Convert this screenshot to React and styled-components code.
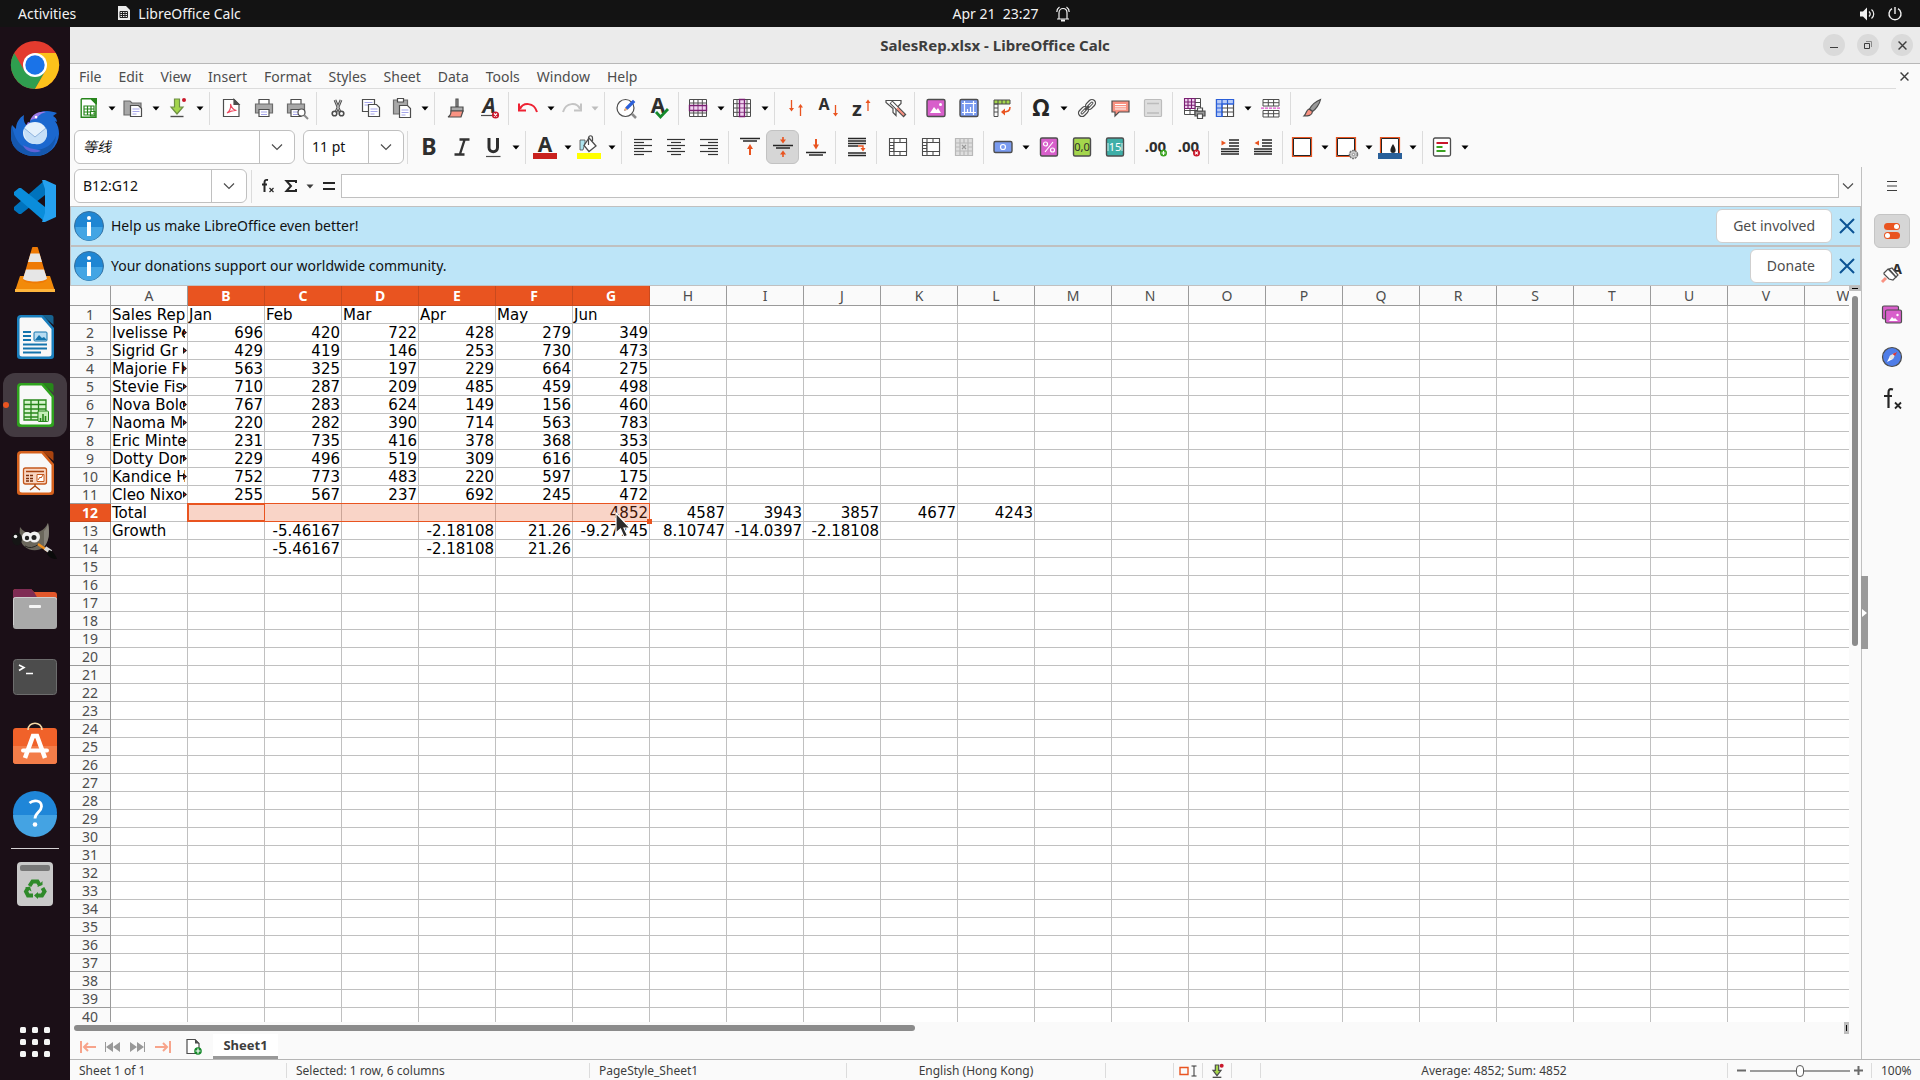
import { useState } from 'react'
import styled, { createGlobalStyle, css } from 'styled-components'

const colors = {
  accent: '#e95420',
  chrome: '#fafafa',
  line: '#c0c0c0',
  softLine: '#dcdcdc',
  headerLine: '#9a9a9a',
  text: '#3d3d3d',
  ink: '#4d4d4d',
  info: '#bde5f8',
}

const columns = 'ABCDEFGHIJKLMNOPQRSTUVW'.split('')

const COL_WIDTH = 77
const ROW_HEIGHT = 18
const HEAD_WIDTH = 41
const HEAD_HEIGHT = 20

const GlobalStyle = createGlobalStyle`
  * {
    box-sizing: border-box;
  }
  body {
    margin: 0;
    overflow: hidden;
    font-family: 'Noto Sans', 'Noto Sans CJK SC', sans-serif;
    font-size: 14px;
    line-height: 20px;
    color: ${colors.text};
  }
  button, input {
    font: inherit;
    color: inherit;
    margin: 0;
    padding: 0;
    border: 0;
    background: none;
  }
  svg {
    display: block;
    flex: none;
    overflow: visible;
  }
`

/* ---------- desktop ---------- */

const Desktop = styled.div`
  height: 100vh;
  display: flex;
  flex-direction: column;
  background: linear-gradient(165deg, #1b0f17 70%, #28131f);
`

const TopBar = styled.header`
  height: 27px;
  flex: none;
  display: grid;
  grid-template-columns: 1fr auto 1fr;
  align-items: center;
  padding: 0 18px;
  background: #131313;
  color: #f2f2f2;
`

const TopGroup = styled.div`
  display: flex;
  align-items: center;
  gap: ${(props) => props.$gap}px;
  justify-content: ${(props) => (props.$end ? 'flex-end' : 'flex-start')};
`

const AppMenu = styled.button`
  display: flex;
  align-items: center;
  gap: 8px;
`

const Clock = styled.button`
  display: flex;
  align-items: center;
  gap: 17px;
  padding-left: 102px;
  white-space: pre;
`

const Workspace = styled.div`
  flex: 1;
  min-height: 0;
  display: flex;
`

const Dock = styled.nav`
  width: 70px;
  flex: none;
  display: flex;
  flex-direction: column;
  align-items: center;
  padding: 6px 0;
`

const DockList = styled.div`
  display: flex;
  flex-direction: column;
  gap: 4px;
`

const DockButton = styled.button`
  position: relative;
  width: 64px;
  height: 64px;
  display: grid;
  place-items: center;
  border-radius: 12px;
  background: ${(props) => (props.$active ? '#433a41' : 'none')};
`

const RunningDot = styled.span`
  position: absolute;
  left: 0;
  top: 29px;
  width: 6px;
  height: 6px;
  border-radius: 3px;
  background: ${colors.accent};
`

const DockRule = styled.div`
  width: 48px;
  height: 1px;
  margin: 3px 0;
  background: #d5d2d4;
`

const Spacer = styled.div`
  flex: 1;
`

/* ---------- window ---------- */

const Window = styled.main`
  flex: 1;
  min-width: 0;
  display: flex;
  flex-direction: column;
  background: ${colors.chrome};
`

const TitleBar = styled.div`
  height: 37px;
  flex: none;
  display: grid;
  grid-template-columns: 1fr auto 1fr;
  align-items: center;
  padding: 0 7px;
  background: #ebebeb;
  border-bottom: 1px solid #b8b8b8;
`

const Title = styled.h1`
  grid-column: 2;
  margin: 0;
  font-size: 15px;
  font-weight: 700;
`

const WindowButtons = styled.div`
  display: flex;
  justify-content: flex-end;
  gap: 12px;
`

const RoundButton = styled.button`
  width: 22px;
  height: 22px;
  display: grid;
  place-items: center;
  border-radius: 11px;
  background: #dadada;
`

const MenuRow = styled.div`
  height: 25px;
  flex: none;
  display: flex;
`

const MenuBar = styled.nav`
  flex: 1;
  display: flex;
  align-items: center;
  gap: 1px;
  padding: 1px 0 0 1px;
  border-bottom: 1px solid ${colors.softLine};
`

const MenuItem = styled.button`
  padding: 0 8px;
  color: ${colors.ink};
`

const CloseDocument = styled.button`
  width: 24px;
  padding-left: 4px;
`

const Toolbar = styled.div`
  height: ${(props) => props.$height}px;
  flex: none;
  display: flex;
  align-items: center;
  padding-left: 4px;
`

const Separator = styled.span`
  width: 1px;
  height: 33px;
  flex: none;
  margin: 0 4px 0 3px;
  background: ${colors.softLine};
`

const ToolButton = styled.button`
  width: 33px;
  height: 34px;
  flex: none;
  display: grid;
  place-items: center;
  ${(props) =>
    props.$pressed &&
    css`
      border: 1px solid #c2c2c2;
      border-radius: 6px;
      background: #d6d6d6;
    `}
`

const SplitTool = styled.span`
  display: flex;
  align-items: center;
  flex: none;
  margin-left: -2px;
`

const CaretButton = styled.button`
  width: 13px;
  height: 34px;
  display: grid;
  place-items: center;
  color: ${(props) => (props.$faded ? '#bdbdbd' : '#000')};
`

const Combo = styled.div`
  width: ${(props) => props.$width}px;
  height: 34px;
  flex: none;
  display: flex;
  margin-right: ${(props) => props.$gap}px;
  border: 1px solid ${colors.line};
  border-radius: 6px;
  background: #fff;
  color: #111;
`

const ComboInput = styled.input`
  flex: 1;
  min-width: 0;
  padding-left: 8px;
  font-style: ${(props) => (props.$italic ? 'italic' : 'normal')};
`

const ComboButton = styled.button`
  width: 35px;
  display: grid;
  place-items: center;
  border-left: 1px solid ${colors.line};
`

/* ---------- document area ---------- */

const Body = styled.div`
  flex: 1;
  min-height: 0;
  display: flex;
`

const DocumentPane = styled.section`
  flex: 1;
  min-width: 0;
  display: flex;
  flex-direction: column;
`

const FormulaBar = styled.div`
  height: 39px;
  flex: none;
  display: flex;
  align-items: center;
  padding: 0 0 1px 4px;
`

const SmallTool = styled.button`
  width: ${(props) => props.$width}px;
  height: 32px;
  display: grid;
  place-items: center;
`

const FormulaInput = styled.input`
  flex: 1;
  min-width: 0;
  height: 24px;
  padding: 0 4px;
  border: 1px solid ${colors.line};
  background: #fff;
`

const ExpandButton = styled.button`
  width: 22px;
  height: 24px;
  display: grid;
  place-items: center;
  padding-right: 4px;
`

const InfoBar = styled.div`
  height: 40px;
  flex: none;
  display: flex;
  align-items: center;
  gap: 7px;
  padding: 0 1px 0 3px;
  border: 1px solid ${colors.line};
  background: ${colors.info};
  color: #111;
`

const InfoActions = styled.div`
  display: flex;
  gap: 3px;
  margin-left: auto;
`

const InfoButton = styled.button`
  height: 34px;
  padding: 0 16px;
  border: 1px solid #cfcfcf;
  border-radius: 6px;
  background: #fff;
  color: ${colors.ink};
`

const InfoClose = styled.button`
  width: 24px;
  display: grid;
  place-items: center;
`

const SheetRow = styled.div`
  flex: 1;
  min-height: 0;
  display: flex;
`

const SheetView = styled.div`
  position: relative;
  flex: 1;
  min-width: 0;
  overflow: hidden;
  background: #fff;
`

const Grid = styled.table`
  table-layout: fixed;
  width: ${HEAD_WIDTH + columns.length * COL_WIDTH}px;
  border-collapse: separate;
  border-spacing: 0;
`

const HeadCell = styled.th`
  width: ${(props) => (props.$corner ? HEAD_WIDTH : COL_WIDTH)}px;
  height: ${HEAD_HEIGHT}px;
  padding: 0;
  line-height: 19px;
  font-weight: ${(props) => (props.$selected ? 700 : 400)};
  color: ${(props) => (props.$selected ? '#fff' : colors.ink)};
  background: ${(props) => (props.$selected ? colors.accent : colors.chrome)};
  border-right: 1px solid ${(props) => (props.$selected ? '#c94a1e' : colors.headerLine)};
  border-bottom: 1px solid ${(props) => (props.$selected ? '#c94a1e' : colors.headerLine)};
`

const RowHead = styled(HeadCell)`
  width: ${HEAD_WIDTH}px;
  height: ${ROW_HEIGHT}px;
  line-height: 17px;
`

const Cell = styled.td`
  height: ${ROW_HEIGHT}px;
  padding: 2px 1px 0;
  border-right: 1px solid ${colors.line};
  border-bottom: 1px solid ${colors.line};
  font-family: 'DejaVu Sans', sans-serif;
  font-size: 15px;
  line-height: 15px;
  color: #000;
  white-space: nowrap;
  text-align: ${(props) => (props.$numeric ? 'right' : 'left')};
`

const Clipped = styled.div`
  display: flex;
  align-items: center;
  height: 17px;
  margin-top: -2px;

  span {
    flex: 1;
    min-width: 0;
    align-self: flex-start;
    overflow: hidden;
    line-height: 19px;
  }
  svg {
    margin: 0 -1px 0 -2px;
  }
`

const SelectionBox = styled.div`
  position: absolute;
  border: 1px solid ${colors.accent};
  background: rgba(233, 84, 32, 0.25);
`

const ActiveCell = styled.div`
  width: ${COL_WIDTH}px;
  height: 100%;
  border: 1px solid ${colors.accent};
`

const FillHandle = styled.div`
  position: absolute;
  right: -3px;
  bottom: -3px;
  width: 5px;
  height: 5px;
  background: ${colors.accent};
`

const Pointer = styled.svg`
  position: absolute;
  left: 545px;
  top: 226px;
`

const ScrollColumn = styled.div`
  width: 12px;
  flex: none;
  display: flex;
  flex-direction: column;
  align-items: center;
`

const SplitHandle = styled.div`
  display: grid;
  place-items: center;
  flex: none;
  width: ${(props) => (props.$vertical ? 5 : 12)}px;
  height: ${(props) => (props.$vertical ? 12 : 5)}px;
  background: #bdbdbd;

  &::after {
    content: '';
    width: ${(props) => (props.$vertical ? 1 : 6)}px;
    height: ${(props) => (props.$vertical ? 6 : 1)}px;
    background: #000;
  }
`

const ScrollThumb = styled.div`
  background: #8b8b8b;
  border-radius: 3px;
  ${(props) => (props.$vertical ? 'width: 6px; height: 47.5%; margin-top: 5px;' : 'height: 6px; width: 47.4%;')}
`

const ScrollRow = styled.div`
  height: 12px;
  flex: none;
  display: flex;
  align-items: center;
  justify-content: space-between;
  padding: 0 12px 0 4px;
`

const TabRow = styled.div`
  height: 25px;
  flex: none;
  display: flex;
  padding-left: 5px;
`

const TabTool = styled.button`
  width: ${(props) => (props.$wide ? 38 : 25)}px;
  display: grid;
  place-items: center;
`

const SheetTab = styled.button`
  width: 65px;
  background: #fff;
  border-bottom: 3px solid #999;
  font-size: 13px;
  font-weight: 700;
`

const Sidebar = styled.aside`
  position: relative;
  width: 59px;
  flex: none;
  display: flex;
  flex-direction: column;
  align-items: center;
  gap: 8px;
  padding: 2px 0 0 2px;
  border-left: 1px solid ${colors.line};
`

const SideButton = styled.button`
  width: 36px;
  height: 34px;
  display: grid;
  place-items: center;
  border: 1px solid ${(props) => (props.$active ? '#c4c4c4' : 'transparent')};
  border-radius: 6px;
  background: ${(props) => (props.$active ? '#d6d6d6' : 'none')};

  &:first-of-type {
    margin-bottom: 3px;
  }
`

const SideGrip = styled.button`
  position: absolute;
  left: -1px;
  top: 409px;
  width: 7px;
  height: 73px;
  background: #9a9a9a;
`

/* ---------- status bar ---------- */

const StatusBar = styled.footer`
  height: 21px;
  flex: none;
  display: grid;
  grid-template-columns: 217px 303px 257px 259px 68px 29px 29px 29px 1fr 144px 48px;
  align-items: center;
  padding-top: 1px;
  border-top: 1px solid #b5b5b5;
  font-size: 12px;
`

const StatusItem = styled.div`
  height: 15px;
  display: flex;
  align-items: center;
  justify-content: ${(props) => (props.$center ? 'center' : 'flex-start')};
  padding-left: ${(props) => (props.$center ? 0 : 9)}px;
  border-right: 1px solid ${colors.softLine};
  white-space: nowrap;

  &:last-child {
    border-right: 0;
  }
`

const ZoomSlider = styled.input`
  appearance: none;
  width: 100px;
  height: 14px;
  margin: 0 4px;

  &::-webkit-slider-runnable-track {
    height: 2px;
    background: #9c9c9c;
  }
  &::-webkit-slider-thumb {
    appearance: none;
    width: 8px;
    height: 12px;
    margin-top: -5px;
    border: 1px solid #5a5a5a;
    border-radius: 4px;
    background: #fff;
  }
`

/* ---------- data ---------- */

const rows = [
  ['Sales Rep', 'Jan', 'Feb', 'Mar', 'Apr', 'May', 'Jun'],
  ['Ivelisse Pe', 696, 420, 722, 428, 279, 349],
  ['Sigrid Gr', 429, 419, 146, 253, 730, 473],
  ['Majorie Fl', 563, 325, 197, 229, 664, 275],
  ['Stevie Fis', 710, 287, 209, 485, 459, 498],
  ['Nova Bolo', 767, 283, 624, 149, 156, 460],
  ['Naoma M', 220, 282, 390, 714, 563, 783],
  ['Eric Minte', 231, 735, 416, 378, 368, 353],
  ['Dotty Dor', 229, 496, 519, 309, 616, 405],
  ['Kandice H', 752, 773, 483, 220, 597, 175],
  ['Cleo Nixo', 255, 567, 237, 692, 245, 472],
  ['Total', '', '', '', '', '', 4852, 4587, 3943, 3857, 4677, 4243],
  ['Growth', '', -5.46167, '', -2.18108, '21.26', '-9.27745', '8.10747', '-14.0397', '-2.18108'],
  ['', '', -5.46167, '', -2.18108, '21.26'],
]

const ROW_COUNT = 40
const selection = { row: 12, from: 1, to: 6 }

const menus = ['File', 'Edit', 'View', 'Insert', 'Format', 'Styles', 'Sheet', 'Data', 'Tools', 'Window', 'Help']

/* ---------- toolbar icons, all on a 24px box ---------- */

const Svg = ({ size = 24, children, ...rest }) => (
  <svg width={size} height={size} viewBox="0 0 24 24" fill="none" stroke="#4d4d4d" strokeWidth="1.2" {...rest}>
    {children}
  </svg>
)

const Glyph = ({ x = 12, y = 18, size = 20, color = '#2e2e2e', weight = 700, slant, children }) => (
  <text
    x={x}
    y={y}
    fontSize={size}
    fontFamily="Noto Sans"
    fontWeight={weight}
    fontStyle={slant ? 'italic' : 'normal'}
    textAnchor="middle"
    fill={color}
    stroke="none"
  >
    {children}
  </text>
)

const lines = (list, color = '#262626', width = 1.5) =>
  list.map(([x1, x2, y]) => <path key={`${x1}-${y}`} d={`M${x1} ${y}H${x2}`} stroke={color} strokeWidth={width} />)

const icons = {
  newSheet: (
    <>
      <path d="M5 2.7h9l5 5v13.600H4.200V3.500z" fill="#fff" stroke="#27851c" strokeWidth="1.4" />
      <path d="M13 2h7v7z" fill="#27851c" stroke="none" />
      <path d="M7 10h10v9H7zM7 13h10M7 16h10M10.500 10v9M14 10v9" stroke="#27851c" strokeWidth="1.2" />
      <path d="M13.500 15.500h4.500v4.500h-4.500z" fill="#fff" stroke="#27851c" />
      <path d="M15 20v-2M17 20v-3.500" stroke="#27851c" />
    </>
  ),
  open: (
    <>
      <path d="M3 19V5h6l2 2h9v12z" fill="#a8a8a8" stroke="#6b6b6b" />
      <path d="M9.500 9.500h8l3 3v8h-11z" fill="#fff" />
      <path d="M11.500 13h7M11.500 15.500h7M11.500 18h4" stroke="#a5a5ea" />
    </>
  ),
  save: (
    <>
      <path d="M9.500 3h5v8h3.500l-6 7-6-7h3.500z" fill="#a4d64c" stroke="#6f8f45" />
      <path d="M5.500 20.500h13" strokeWidth="1.400" />
      <circle cx="19" cy="4" r="2" fill="#c9182b" stroke="none" />
    </>
  ),
  pdf: (
    <>
      <path d="M5 3.500h10l5 5v12H4.500v-17z" fill="#fff" />
      <path d="M15 3.500v5h5z" fill="#4d4d4d" />
      <path d="M8 17c3-2 4-5 3.500-9 1 4 3 6 6 6.500-3-.5-6 .5-9.500 2.500z" stroke="#ee4b62" strokeWidth="1.100" />
    </>
  ),
  print: (
    <>
      <path d="M7 8V3.500h10V8" fill="#fff" />
      <path d="M3.500 8h17v9h-17z" fill="#a8a8a8" stroke="#6b6b6b" />
      <path d="M7 13.500h10v7H7z" fill="#fff" />
      <path d="M9 16h6M9 18.500h6" stroke="#a5a5ea" />
    </>
  ),
  preview: (
    <>
      <path d="M6 8V3.500h10V8" fill="#fff" />
      <path d="M2.500 8h17v9h-17z" fill="#a8a8a8" stroke="#6b6b6b" />
      <path d="M6 13.500h10v7H6z" fill="#fff" />
      <path d="M8 16h6M8 18.500h6" stroke="#a5a5ea" />
      <circle cx="16.500" cy="16.500" r="3.500" fill="#fff" />
      <path d="M19 19l4 4" stroke="#8b8b8b" strokeWidth="2" />
    </>
  ),
  cut: (
    <>
      <path d="M9 4l5 12M15 4l-5 12" stroke="#4d4d4d" strokeWidth="2.800" />
      <path d="M9 4l5 12M15 4l-5 12" stroke="#bbb" strokeWidth="1" />
      <circle cx="8.500" cy="17.500" r="2.300" strokeWidth="1.600" />
      <circle cx="15.500" cy="17.500" r="2.300" strokeWidth="1.600" />
    </>
  ),
  copy: (
    <>
      <path d="M3.500 3.500h12v12h-12z" fill="#fff" />
      <path d="M5.500 6.500h8M5.500 9h4" stroke="#a5a5ea" />
      <path d="M9.500 8.500h8l3 3v9h-11z" fill="#fff" />
      <path d="M11.500 13h7M11.500 15.500h7M11.500 18h4" stroke="#a5a5ea" />
    </>
  ),
  paste: (
    <>
      <path d="M3.500 4h14v14h-14z" fill="#a8a8a8" stroke="#6b6b6b" />
      <path d="M7.500 2.500h6V6h-6z" fill="#fff" />
      <path d="M9.500 9.500h8l3 3v9h-11z" fill="#fff" />
      <path d="M11.500 14h7M11.500 16.500h7M11.500 19h4" stroke="#a5a5ea" />
    </>
  ),
  clone: (
    <>
      <path d="M12 3h2v8h-2z" fill="#aaa" />
      <path d="M7 11h12v4H7z" fill="#aaa" />
      <path d="M7 15h12l-2 6H4c2-1 3-3 3-6z" fill="#f99282" />
    </>
  ),
  clear: (
    <>
      <Glyph y={17} x={12} size={21} slant>A</Glyph>
      <path d="M4 19.500h11" />
      <circle cx="18.500" cy="19" r="3.600" fill="#c9182b" stroke="none" />
      <path d="M17 17.500l3 3M20 17.500l-3 3" stroke="#fff" />
    </>
  ),
  undo: (
    <>
      <path d="M4 13C7 6 18 6 21 16" stroke="#e23" strokeWidth="2" />
      <path d="M3 7.500v7h7" stroke="#e23" strokeWidth="2" />
    </>
  ),
  redo: (
    <>
      <path d="M20 13C17 6 6 6 3 16" stroke="#c4c4c4" strokeWidth="2" />
      <path d="M21 7.500v7h-7" stroke="#c4c4c4" strokeWidth="2" />
    </>
  ),
  find: (
    <>
      <circle cx="11.500" cy="12" r="8.500" fill="#fff" />
      <path d="M18 18l4 4" stroke="#8b8b8b" strokeWidth="2.500" />
      <path d="M11 14l1-2.500 7-7 1.500 1.500-7 7z" fill="#2b5fd9" stroke="#2b5fd9" />
      <path d="M10 15l1.300-3.500 2.200 2.200z" fill="#f7b26a" stroke="none" />
    </>
  ),
  spell: (
    <>
      <Glyph y={17} x={11} size={21}>A</Glyph>
      <path d="M9 16l4.500 5L21 13" stroke="#168a2b" strokeWidth="2.800" />
    </>
  ),
  row: (
    <>
      <path d="M3.500 3.500h17v17h-17zM7.700 3.500v17M12 3.500v17M16.300 3.500v17M3.500 7h17M3.500 17h17" fill="#fff" strokeWidth="1" />
      <path d="M3.500 9.500h17v5h-17z" fill="#f0d3f0" stroke="#7a1f72" strokeWidth="1.400" />
      <path d="M7.700 10v4M12 10v4M16.300 10v4" stroke="#7a1f72" strokeWidth=".8" />
    </>
  ),
  column: (
    <>
      <path d="M3.500 3.500h17v17h-17zM3.500 7.700h17M3.500 12h17M3.500 16.300h17M7 3.500v17M17 3.500v17" fill="#fff" strokeWidth="1" />
      <path d="M9.500 3.500h5v17h-5z" fill="#f0d3f0" stroke="#7a1f72" strokeWidth="1.400" />
      <path d="M10 7.700h4M10 12h4M10 16.300h4" stroke="#7a1f72" strokeWidth=".8" />
    </>
  ),
  sort: (
    <>
      <path d="M7.500 4v9M16.500 20v-9" stroke={colors.accent} strokeWidth="1.300" />
      <path d="M5 12h5l-2.500 3.500zM14 11.500h5L16.500 8z" fill={colors.accent} stroke="none" />
    </>
  ),
  sortAsc: (
    <>
      <Glyph x={7} y={14} size={16}>A</Glyph>
      <path d="M18.500 9v9" stroke={colors.accent} strokeWidth="1.300" />
      <path d="M16 17h5l-2.500 3.500z" fill={colors.accent} stroke="none" />
    </>
  ),
  sortDesc: (
    <>
      <Glyph x={7} y={20} size={20}>z</Glyph>
      <path d="M18 15V5" stroke={colors.accent} strokeWidth="1.300" />
      <path d="M15.500 7h5L18 3.500z" fill={colors.accent} stroke="none" />
    </>
  ),
  filter: (
    <>
      <path d="M3 4.500h15v3l-5 5v7l-3-3v-4l-7-6z" fill="#fff" />
      <path d="M8 6l14 14" stroke="#4d4d4d" strokeWidth="4" />
      <path d="M8.500 6.500L15 13" stroke="#fff" strokeWidth="2" />
      <path d="M14 12l7 7" stroke="#f99282" strokeWidth="2" />
    </>
  ),
  image: (
    <>
      <rect x="3" y="3.500" width="18" height="17" rx="1.500" fill="#d85fcb" strokeWidth="1.400" />
      <path d="M6 17l4-6 2.500 3 1.500-2 3 5z" fill="#fff" stroke="none" />
      <circle cx="16.500" cy="8.500" r="1.500" fill="#fff" stroke="none" />
    </>
  ),
  chart: (
    <>
      <rect x="3" y="3.500" width="18" height="17" rx="1.500" fill="#7a9bf0" strokeWidth="1.400" />
      <path d="M7.500 5v14M5 16.500h14M16.500 5v14M5 7.500h14M10.500 16v-3M13.500 16v-5" stroke="#fff" strokeWidth="1.200" />
    </>
  ),
  pivot: (
    <>
      <path d="M4 4h16v4H4z" fill="#a4d64c" strokeWidth="1" />
      <path d="M4 8h4v12.500H4zM4 12h4M4 16h4M8 4v4M12 4v4M16 4v4" strokeWidth="1" />
      <path d="M20 11c0 4-2 5-8 5" stroke={colors.accent} strokeWidth="1.600" />
      <path d="M11 16l4-3.500v7z" fill={colors.accent} stroke="none" />
    </>
  ),
  omega: <Glyph y={20} size={23} color="#262626">Ω</Glyph>,
  link: (
    <g transform="rotate(-45 12 12)">
      <rect x="1.500" y="8.500" width="11" height="7" rx="3.500" strokeWidth="1.300" />
      <rect x="11.500" y="8.500" width="11" height="7" rx="3.500" strokeWidth="1.300" />
      <rect x="4" y="11" width="7" height="2" rx="1" strokeWidth="1" />
      <rect x="13" y="11" width="7" height="2" rx="1" strokeWidth="1" />
      <path d="M9 12h6" />
    </g>
  ),
  comment: (
    <>
      <path d="M4 5h17v11h-10l-4 4v-4H4z" fill="#f99282" />
      <path d="M7 8.500h11M7 10.800h11M7 13h11" stroke="#fff" strokeWidth="1.100" />
    </>
  ),
  header: (
    <>
      <rect x="3.500" y="3.500" width="17" height="17" rx="1" fill="#dedede" stroke="#bcbcbc" />
      <path d="M6 7.500h12M6 17h12" stroke="#bcbcbc" strokeWidth="1.500" />
    </>
  ),
  printArea: (
    <>
      <path d="M2.500 2.500h16v16h-16zM2.500 6.500h16M2.500 10.500h16M2.500 14.500h16M8 2.500v16M13 2.500v16" fill="#fff" strokeWidth="1" />
      <path d="M2.500 2.500H13v10H2.500zM2.500 6h10.500M2.500 9.200h10.500M6 2.500v10M9.500 2.500v10" fill="#f0d3f0" stroke="#7a1f72" strokeWidth="1.100" />
      <path d="M13 15h10v5H13z" fill="#999" />
      <path d="M15.500 12h5v3h-5zM15.500 18h5v4.500h-5z" fill="#fff" />
    </>
  ),
  freeze: (
    <>
      <path d="M3.500 3.500h17v17h-17z" fill="#fff" />
      <path d="M3.500 3.500h17v4.500H9v12.500H3.500z" fill="#b8ccf7" stroke="#2b5fd9" />
      <path d="M3.500 8h17M9 3.500v17M14.500 3.500v4.500" stroke="#2b5fd9" />
      <path d="M9 12h11M9 16h11M14.500 8v12" strokeWidth="1" />
      <path d="M3.500 12H9M3.500 16H9" stroke="#2b5fd9" strokeWidth="1" />
    </>
  ),
  split: (
    <>
      <path d="M4 3.500h16v6.500H4zM4 6.700h16M9.300 3.500V10M14.600 3.500V10M4 14.500h16V21H4zM4 17.700h16M9.300 14.500V21M14.600 14.500V21" fill="#fff" strokeWidth="1" />
      <path d="M2 12.200h20" stroke="#e052d0" strokeDasharray="3 1" />
    </>
  ),
  draw: (
    <>
      <path d="M20.500 3.500c-5 2-9 6-11 9.500l3 2.500c3-2 7-7 8-12z" fill="#999" />
      <path d="M9 13c-3 1-2 4-5 7 4 0 8 0 8.500-4.500z" fill="#f99282" />
    </>
  ),
  bold: <Glyph y={20} size={23}>B</Glyph>,
  italic: <path d="M9.500 4.500h10M4.500 19.500h10M14.500 5l-4.500 14" stroke="#333" strokeWidth="2.400" />,
  underline: (
    <>
      <path d="M8 3v9.500c0 5.500 8.500 5.500 8.500 0V3" stroke="#2e2e2e" strokeWidth="3" />
      <path d="M5 21.500h14.500" />
    </>
  ),
  fontColor: (
    <>
      <Glyph y={17} size={21}>A</Glyph>
      <path d="M0 18h24v6H0z" fill="#c9211e" stroke="none" />
    </>
  ),
  highlight: (
    <>
      <path d="M3 15V5h5v3l-2 7z" fill="#aee4ee" strokeWidth=".8" />
      <path d="M12 3l7 8-7 5.500-5-6z" fill="#fff" strokeWidth="1.300" />
      <path d="M11.500 10V3c0-3 4-3 4 0v3" />
      <path d="M0 18h24v6H0z" fill="#ff0" stroke="none" />
    </>
  ),
  left: lines([[3, 21, 4.500], [3, 13, 7.500], [3, 21, 10.500], [3, 13, 13.500], [3, 21, 16.500], [3, 13, 19.500]], '#333', 1.200),
  center: lines([[3, 21, 4.500], [7, 17, 7.500], [3, 21, 10.500], [7, 17, 13.500], [3, 21, 16.500], [7, 17, 19.500]], '#333', 1.200),
  right: lines([[3, 21, 4.500], [11, 21, 7.500], [3, 21, 10.500], [11, 21, 13.500], [3, 21, 16.500], [11, 21, 19.500]], '#333', 1.200),
  top: (
    <>
      {lines([[2, 22, 3.500], [5, 19, 6]])}
      <path d="M12 20v-6" stroke={colors.accent} strokeWidth="2" />
      <path d="M9 14h6l-3-5z" fill={colors.accent} stroke="none" />
    </>
  ),
  middle: (
    <>
      {lines([[2, 22, 10.500], [5, 19, 13]])}
      <path d="M12 2v3M12 22v-3" stroke={colors.accent} strokeWidth="1.600" />
      <path d="M9 4.500h6l-3 4zM9 19.500h6l-3-4z" fill={colors.accent} stroke="none" />
    </>
  ),
  bottom: (
    <>
      {lines([[2, 22, 17.500], [5, 19, 20]])}
      <path d="M12 4v6" stroke={colors.accent} strokeWidth="2" />
      <path d="M9 9.500h6l-3 5z" fill={colors.accent} stroke="none" />
    </>
  ),
  wrap: (
    <>
      {lines([[3, 21, 3.500], [3, 21, 6], [3, 21, 8.500], [3, 13, 11], [3, 21, 18], [3, 21, 20.500]])}
      <path d="M13 11h5v3" stroke={colors.accent} strokeWidth="1.400" />
      <path d="M15.500 13h5L18 16.500z" fill={colors.accent} stroke="none" />
    </>
  ),
  merge: (
    <>
      <path d="M3.500 3.500h17v17h-17zM3.500 7.500h17M3.500 16.500h17M8 3.500v17M14 3.500v4M3.500 10.500H8M3.500 13.500H8M14 16.500v4" fill="#fff" strokeWidth="1.100" />
      <path d="M8 7.500h12.500v9H8z" fill="#fff" strokeWidth="1.100" />
    </>
  ),
  unmerge: (
    <g stroke="#b8b8b8">
      <path d="M3.500 3.500h17v17h-17zM3.500 8h17M3.500 16h17M8 3.500v17M16 3.500v17M12 3.500V8M12 16v4.500M3.500 12H8M16 12h4.500" fill="#dedede" />
      <path d="M10 10l2 2-2 2M14 10l-2 2 2 2" stroke="#999" />
    </g>
  ),
  currency: (
    <>
      <rect x="3" y="6.500" width="18" height="11" rx="1.500" fill="#7a9bf0" strokeWidth="1.400" />
      <circle cx="12" cy="12" r="2.500" stroke="#fff" />
    </>
  ),
  percent: (
    <>
      <rect x="3.500" y="3" width="17" height="18" rx="1.500" fill="#d85fcb" strokeWidth="1.400" />
      <path d="M16 7l-8 10" stroke="#fff" />
      <circle cx="8.500" cy="9" r="2" stroke="#fff" />
      <circle cx="15.500" cy="15" r="2" stroke="#fff" />
    </>
  ),
  number: (
    <>
      <rect x="3.500" y="3" width="17" height="18" rx="1.500" fill="#a4d64c" strokeWidth="1.400" />
      <Glyph y={16} size={11} weight={400}>0,0</Glyph>
    </>
  ),
  date: (
    <>
      <rect x="3.500" y="3" width="17" height="18" rx="1.500" fill="#3fafa8" strokeWidth="1.400" />
      <Glyph y={16} size={11} weight={400} color="#fff">15</Glyph>
      <path d="M5 8v8M19 8v8" stroke="#fff" strokeWidth=".8" />
    </>
  ),
  addDecimal: (
    <>
      <Glyph x={11.500} y={17} size={15}>.00</Glyph>
      <circle cx="19.500" cy="18" r="3.500" fill="#3aa320" stroke="none" />
      <path d="M17.500 18h4M19.500 16v4" stroke="#fff" />
    </>
  ),
  removeDecimal: (
    <>
      <Glyph x={11.500} y={17} size={15}>.00</Glyph>
      <circle cx="19.500" cy="18" r="3.500" fill="#c9182b" stroke="none" />
      <path d="M18.100 16.600l2.800 2.800M20.900 16.600l-2.800 2.800" stroke="#fff" />
    </>
  ),
  indent: (
    <>
      {lines([[11, 21, 5], [11, 21, 8], [11, 21, 11], [3, 21, 14], [3, 21, 16.500], [3, 21, 19]])}
      <path d="M3.500 5.500v5l4.500-2.500z" fill={colors.accent} stroke="none" />
    </>
  ),
  outdent: (
    <>
      {lines([[11, 21, 5], [11, 21, 8], [11, 21, 11], [3, 21, 14], [3, 21, 16.500], [3, 21, 19]])}
      <path d="M8 5.500v5L3.500 8z" fill={colors.accent} stroke="none" />
    </>
  ),
  borders: (
    <>
      <path d="M2.500 2.500h19v19h-19z" fill="#fff" stroke={colors.accent} />
      <path d="M3.500 3.500h17v17h-17z" stroke="#262626" strokeWidth="1" />
    </>
  ),
  borderStyle: (
    <>
      <path d="M2.500 2.500h19v19h-19z" fill="#fff" stroke={colors.accent} />
      <path d="M3.500 3.500h17v17h-17z" stroke="#262626" strokeWidth="1" />
      <circle cx="19.500" cy="19.500" r="4" fill="#ccc" stroke="#777" strokeWidth="1.500" strokeDasharray="2 .8" />
      <circle cx="19.500" cy="19.500" r="1.200" fill="#fff" stroke="#777" strokeWidth=".8" />
    </>
  ),
  borderColor: (
    <>
      <path d="M2.500 2.500h19v19h-19z" fill="#fff" stroke={colors.accent} />
      <path d="M3.500 3.500h17v17h-17z" stroke="#262626" strokeWidth="1" />
      <path d="M15 9c4 6 3 9 0 9s-4-3 0-9z" fill="#222" stroke="none" />
      <path d="M0 18h24v6H0z" fill="#2a6099" stroke="none" />
    </>
  ),
  conditional: (
    <>
      <rect x="3.500" y="3" width="17" height="18" rx="1.500" fill="#fff" strokeWidth="1.300" />
      <path d="M6.500 8H18" stroke="#c9182b" strokeWidth="2" />
      <path d="M6.500 12h6M6.500 16h9" stroke="#3aa320" strokeWidth="2" />
    </>
  ),
}

// "name" is a plain button, "name+" has a drop-down arrow, "|" is a separator
const standardTools =
  'newSheet+ open+ save+ | pdf print preview | cut copy paste+ | clone clear | undo+ redo+ | find spell | row+ column+ | sort sortAsc sortDesc filter | image chart pivot | omega+ link comment header | printArea freeze+ split | draw'
const formatTools =
  '| bold italic underline+ | fontColor+ highlight+ | left center right | top middle bottom | wrap | merge merge unmerge | currency+ percent number date | addDecimal removeDecimal | indent outdent | borders+ borderStyle+ borderColor+ | conditional+'

const Caret = () => (
  <svg width="8" height="5" viewBox="0 0 8 5">
    <path d="M.5 .5h7L4 4.500z" fill="currentColor" />
  </svg>
)

const Chevron = () => (
  <svg width="12" height="8" viewBox="0 0 12 8" fill="none" stroke="#4d4d4d" strokeWidth="1.200">
    <path d="M1 1.500l5 5 5-5" />
  </svg>
)

const Cross = ({ size, color = '#3d3d3d', width = 1.5 }) => (
  <svg width={size} height={size} viewBox="0 0 16 16" stroke={color} strokeWidth={width}>
    <path d="M1 1l14 14M15 1L1 15" />
  </svg>
)

function Tools({ items }) {
  return items.split(' ').map((item, i) => {
    if (item === '|') return <Separator key={i} />
    const name = item.replace('+', '')
    const button = (
      <ToolButton key={i} aria-label={name} $pressed={name === 'middle'}>
        <Svg>{icons[name]}</Svg>
      </ToolButton>
    )
    if (name === item) return button
    return (
      <SplitTool key={i}>
        {button}
        <CaretButton aria-label={`${name} options`} $faded={name === 'redo'}>
          <Caret />
        </CaretButton>
      </SplitTool>
    )
  })
}

function ComboBox({ label, value, width, gap = 0, italic }) {
  return (
    <Combo $width={width} $gap={gap}>
      <ComboInput aria-label={label} defaultValue={value} $italic={italic} />
      <ComboButton aria-label={`${label} list`}>
        <Chevron />
      </ComboButton>
    </Combo>
  )
}

/* ---------- dock icons, on a 48px box ---------- */

const OfficeIcon = ({ main, dark, children }) => (
  <>
    <path d="M10 2h22l11 13v28a3 3 0 0 1-3 3H9a3 3 0 0 1-3-3V6a4 4 0 0 1 4-4z" fill={main} />
    <path d="M10 4.500h20.500L40.500 16v25a2.500 2.500 0 0 1-2.500 2.500H11A2.500 2.500 0 0 1 8.500 41V6.500a2 2 0 0 1 1.500-2z" fill="#f8f8f8" />
    <path d="M31 2h9a2.500 2.500 0 0 1 2.500 2.500V12z" fill={dark} />
    {children}
  </>
)

const dockApps = [
  {
    name: 'Google Chrome',
    icon: (
      <>
        <circle cx="24" cy="24" r="24" fill="#e33b2e" />
        <path d="M3.200 12A24 24 0 0 0 24 48l10.400-18-10.400 6-10.400-6z" fill="#2f9e4f" />
        <path d="M24 48a24 24 0 0 0 20.800-36H24l10.400 18z" fill="#fcc21b" />
        <circle cx="24" cy="24" r="12" fill="#fff" />
        <circle cx="24" cy="24" r="9.700" fill="#1a73e8" />
      </>
    ),
  },
  {
    name: 'Thunderbird',
    icon: (
      <g transform="translate(0 1)">
        <path d="M1 15l4 4c0-6 3-11 8-14-1 6 1 9 4 12 2-10 10-16 19-16 4 0 7 1 10 2l-4 3c2 1 4 3 4 6l-2-1c3 4 4 8 4 13a23 23 0 0 1-24 22C10 46 0 38 0 26c0-4 0-8 1-11z" fill="#1b68cf" />
        <path d="M1 15c2 14 8 23 20 25 12 1 20-5 24-14-1 14-10 20-21 20C10 46 0 38 0 26z" fill="#1557ad" />
        <path d="M19 11C21 4 28 1 35 2c-4 1-8 3-9 7-3 0-5 0-7 2z" fill="#9b7be8" />
        <path d="M17 12c-2 3-3 6-2 10l8-8z" fill="#8a6be0" />
        <ellipse cx="24" cy="23" rx="12" ry="11" fill="#e4f1fc" />
        <path d="M13 18l11 9 11-9c4 10-3 18-11 16-7 0-12-7-11-16z" fill="#c5dff7" />
        <path d="M13 18l11 9 11-9" fill="none" stroke="#8fb4de" />
        <circle cx="25" cy="7" r="1.300" fill="#fff" />
        <path d="M12 35c6 4 14 4 18 6-8 3-16 0-18-6z" fill="#5f63d6" />
      </g>
    ),
  },
  {
    name: 'Visual Studio Code',
    icon: (
      <>
        <path d="M34 3L3 30v3l5 4 2 0L34 18z" fill="#0073bd" />
        <path d="M34 45L3 18v-3l5-4h2L34 30z" fill="#0a8ddb" />
        <path d="M31 3l3 9v24l-3 9 3 0 11-5V8L34 3z" fill="#25a1f0" />
      </>
    ),
  },
  {
    name: 'VLC',
    icon: (
      <>
        <path d="M9 31h30l5 15H4z" fill="#f28a0a" />
        <path d="M4 44h40v3H4z" fill="#ffb63d" />
        <path d="M22 2h4q1 0 1 1l9 31c1 6-25 6-24 0L21 3q0-1 1-1z" fill="#ee7a06" />
        <path d="M19.500 8.500h9L31 17H17zM15 24.500h18l3 9c-2 4-22 4-24 0z" fill="#e6e6e6" />
      </>
    ),
  },
  {
    name: 'LibreOffice Writer',
    icon: (
      <OfficeIcon main="#1a7fbd" dark="#17628f">
        <path d="M12 19h8M12 23h8M12 27h8M12 31.500h24M12 35.500h24M12 39.500h18" stroke="#1474ad" strokeWidth="2" />
        <rect x="23" y="19" width="13" height="9" rx="1" fill="#b7dcf2" stroke="#1474ad" />
        <path d="M24 27l4-5 3 3 2-1 3 3z" fill="#1474ad" />
      </OfficeIcon>
    ),
  },
  {
    name: 'LibreOffice Calc',
    active: true,
    icon: (
      <OfficeIcon main="#2fa31e" dark="#27861a">
        <path d="M13 19h22v20H13zM13 23.500h22M13 28h22M13 32h22M13 36h22M20 19v20M27.500 19v20" fill="#d8f5cf" stroke="#27861a" strokeWidth="1.300" />
        <rect x="27" y="30" width="10.500" height="10.500" rx="1" fill="#c5efb8" stroke="#27861a" />
        <path d="M29.500 40v-3M32 40v-7M34.500 40v-5" stroke="#27861a" strokeWidth="1.600" />
      </OfficeIcon>
    ),
  },
  {
    name: 'LibreOffice Impress',
    icon: (
      <OfficeIcon main="#d4601c" dark="#a8430f">
        <rect x="12.500" y="19" width="23" height="16" rx="2" fill="#f9d6c2" stroke="#c4581c" strokeWidth="1.300" />
        <path d="M15 22.500h18M24 35v3M24 37l-5 4M24 37l5 4" stroke="#a8430f" strokeWidth="1.400" />
        <path d="M15 26.500h8M15 29.500h8M15 32h8" stroke="#7c2f0a" strokeDasharray="3 1" strokeWidth="1.500" />
        <path d="M26 25.500h7v7h-7zM27 31l2-3 1 1 2-3" fill="#fff" stroke="#c4581c" />
      </OfficeIcon>
    ),
  },
  {
    name: 'GIMP',
    icon: (
      <g transform="translate(0 2)">
        <path d="M9 8c3 4 6 6 10 6 8 0 14-2 18-10 2 10 1 18-4 24-6 5-15 4-20-1-4-4-5-10-4-19z" fill="#6b675c" />
        <path d="M33 12c2-2 3-4 4-8 2 10 1 18-4 24z" fill="#87837a" />
        <circle cx="16" cy="18" r="5" fill="#f2f2f2" />
        <circle cx="23.500" cy="18" r="5.500" fill="#f2f2f2" />
        <circle cx="16" cy="19" r="2.200" fill="#222" />
        <circle cx="23" cy="18.500" r="2.500" fill="#222" />
        <ellipse cx="6" cy="20" rx="5" ry="6.500" fill="#151515" />
        <circle cx="4.500" cy="17.500" r="1.800" fill="#eee" />
        <path d="M14 27q6 4 14-2" stroke="#2c2a26" fill="none" />
        <path d="M27 25l10 7" stroke="#f0901e" strokeWidth="2.500" />
        <path d="M34 29l6 4" stroke="#d9d9d9" strokeWidth="4" />
        <path d="M38 31c4 1 6 4 8 9-5 0-8-2-10-5z" fill="#0b0b0b" />
      </g>
    ),
  },
  {
    name: 'Files',
    icon: (
      <>
        <path d="M2 14V7a3 3 0 0 1 3-3h15l3 3h20a3 3 0 0 1 3 3v6z" fill="#e2572b" />
        <path d="M2 14V7a3 3 0 0 1 3-3h15l3 3 4 7z" fill="#7f2c54" />
        <rect x="2" y="12" width="44" height="32" rx="3" fill="#a9a9a9" />
        <path d="M2.500 40V14.500a2 2 0 0 1 2-2h39a2 2 0 0 1 2 2" fill="none" stroke="#cfcfcf" />
        <rect x="18" y="20" width="12" height="3" rx="1" fill="#f5f5f5" />
      </>
    ),
  },
  {
    name: 'Terminal',
    icon: (
      <>
        <rect x="2.500" y="6.500" width="43" height="35" rx="3" fill="#4c4c4c" stroke="#6d6d6d" />
        <path d="M8 12l5 2.500L8 17.500M15 20.500h7" fill="none" stroke="#fff" strokeWidth="1.600" />
      </>
    ),
  },
  {
    name: 'Ubuntu Software',
    icon: (
      <g transform="translate(0 -1)">
        <rect x="2" y="8" width="44" height="36" rx="3" fill="#f0622a" />
        <path d="M2 26h44v15a3 3 0 0 1-3 3H5a3 3 0 0 1-3-3z" fill="#f37d49" />
        <path d="M17 10C17 1 31 1 31 10" fill="none" stroke="#f7d9a6" strokeWidth="1.500" />
        <path d="M14 38l8-22h4l8 22" fill="none" stroke="#fff" strokeWidth="4.500" />
        <path d="M12 30.500h24" stroke="#fff" strokeWidth="4" strokeLinecap="round" />
      </g>
    ),
  },
  {
    name: 'Help',
    icon: (
      <>
        <circle cx="24" cy="24" r="22" fill="#1f86d8" />
        <path d="M2 26a22 22 0 0 0 44 0z" fill="#44a3e3" />
        <path d="M18.500 14c4-3.500 12-3 12 3.500 0 5-6.500 6-6.500 12" fill="none" stroke="#fff" strokeWidth="2.800" />
        <circle cx="24" cy="35.500" r="2.300" fill="#fff" />
      </>
    ),
  },
]

const TrashIcon = () => (
  <svg width="48" height="48" viewBox="0 0 48 48">
    <rect x="6" y="2" width="36" height="44" rx="4" fill="#c9c9c9" />
    <rect x="9" y="5" width="30" height="6" rx="2" fill="#787878" />
    <g fill="none" stroke="#2f8a2a" strokeWidth="4">
      <path d="M18.500 26l3-4.500h5l2.500 4" />
      <path d="M31.500 28l2 3.500-2.500 4h-5" />
      <path d="M22 35.500h-5l-2-4 2-3.500" />
    </g>
    <path d="M26 27l5.500-2v-4zM27 32v7l-4-3.500zM14 27.500l5-1 1.500 5z" fill="#2f8a2a" />
  </svg>
)

const InfoIcon = () => (
  <svg width="30" height="30" viewBox="0 0 30 30">
    <circle cx="15" cy="15" r="14.500" fill="#1f86d3" stroke="#38709c" />
    <path d="M1.500 16a13.500 13.500 0 0 0 27 0z" fill="#43a5e4" />
    <circle cx="15" cy="7" r="2" fill="#fff" />
    <path d="M13 11h4v14h-4z" fill="#fff" />
  </svg>
)

/* ---------- parts ---------- */

function TopPanel() {
  return (
    <TopBar>
      <TopGroup $gap={41}>
        <button>Activities</button>
        <AppMenu>
          <svg width="13" height="15" viewBox="0 0 13 15">
            <path d="M1 0h8l4 4v10H1z" fill="#ececec" />
            <path d="M3 5.500h7.500v6H3zM3 7.500h7.500M3 9.500h7.500M5.500 5.500v6M8 5.500v6" fill="none" stroke="#222" />
          </svg>
          LibreOffice Calc
        </AppMenu>
      </TopGroup>
      <Clock>
        Apr 21  23:27
        <svg width="14" height="16" viewBox="0 0 14 16" fill="none" stroke="#f2f2f2" strokeWidth="1.200">
          <path d="M1 13h12M3 13V7c0-6 8-6 8 0v6M.8 6C.8 4 2 2 3.500 1M13.200 6c0-2-1.200-4-2.700-5" />
          <path d="M5 14.500h4" strokeWidth="2" />
        </svg>
      </Clock>
      <TopGroup $gap={13} $end>
        <svg width="15" height="14" viewBox="0 0 15 14" fill="none" stroke="#f2f2f2">
          <path d="M0 4.500h3L7 .5v13L3 9.500H0z" fill="#f2f2f2" stroke="none" />
          <path d="M9 4.500c1.500 1.500 1.500 3.500 0 5M11.500 2.500c3 2.500 3 6.500 0 9" strokeWidth="1.200" />
        </svg>
        <svg width="14" height="14" viewBox="0 0 14 14" fill="none" stroke="#f2f2f2" strokeWidth="1.400">
          <path d="M7 0v7M4 1.600a6 6 0 1 0 6 0" />
        </svg>
      </TopGroup>
    </TopBar>
  )
}

function AppDock() {
  return (
    <Dock>
      <DockList>
        {dockApps.map((app) => (
          <DockButton key={app.name} aria-label={app.name} $active={app.active}>
            {app.active && <RunningDot />}
            <svg width="48" height="48" viewBox="0 0 48 48">
              {app.icon}
            </svg>
          </DockButton>
        ))}
      </DockList>
      <DockRule />
      <DockButton aria-label="Trash">
        <TrashIcon />
      </DockButton>
      <Spacer />
      <DockButton aria-label="Show applications">
        <svg width="30" height="30" viewBox="0 0 30 30" fill="#f5f5f5">
          {[0, 12, 24].map((x) => [0, 12, 24].map((y) => <rect key={`${x}-${y}`} x={x} y={y} width="6" height="6" rx="1.500" />))}
        </svg>
      </DockButton>
    </Dock>
  )
}

function Notice({ text, action }) {
  return (
    <InfoBar>
      <InfoIcon />
      {text}
      <InfoActions>
        <InfoButton>{action}</InfoButton>
        <InfoClose aria-label="Close">
          <Cross size={16} color="#0b5394" width={2} />
        </InfoClose>
      </InfoActions>
    </InfoBar>
  )
}

function SheetCell({ value, clipped }) {
  const numeric = value !== '' && !isNaN(value)
  return (
    <Cell $numeric={numeric}>
      {clipped ? (
        <Clipped>
          <span>{value}</span>
          <svg width="4" height="7" viewBox="0 0 4 7">
            <path d="M0 0v7l4-3.500z" fill="#111" />
            <path d="M1 2.500v2l1.500-1z" fill="#e02020" />
          </svg>
        </Clipped>
      ) : (
        value
      )}
    </Cell>
  )
}

function Sheet() {
  const inRange = (i) => i >= selection.from && i <= selection.to
  const box = {
    left: HEAD_WIDTH - 1 + selection.from * COL_WIDTH,
    top: HEAD_HEIGHT - 1 + (selection.row - 1) * ROW_HEIGHT,
    width: (selection.to - selection.from + 1) * COL_WIDTH + 1,
    height: ROW_HEIGHT + 1,
  }

  return (
    <SheetView>
      <Grid>
        <thead>
          <tr>
            <HeadCell as="td" $corner />
            {columns.map((name, i) => (
              <HeadCell key={name} scope="col" $selected={inRange(i)}>
                {name}
              </HeadCell>
            ))}
          </tr>
        </thead>
        <tbody>
          {Array.from({ length: ROW_COUNT }, (_, r) => (
            <tr key={r}>
              <RowHead scope="row" $selected={r + 1 === selection.row}>
                {r + 1}
              </RowHead>
              {columns.map((name, c) => (
                <SheetCell key={name} value={rows[r]?.[c] ?? ''} clipped={c === 0 && r > 0 && r < 11} />
              ))}
            </tr>
          ))}
        </tbody>
      </Grid>
      <SelectionBox style={box}>
        <ActiveCell />
        <FillHandle />
      </SelectionBox>
      <Pointer width="17" height="27" viewBox="0 0 17 27">
        <path d="M1 1v20l4.500-4 3.500 8 3.500-1.500L9 16h6z" fill="#2b2b2b" stroke="#fff" strokeWidth="1.200" />
      </Pointer>
    </SheetView>
  )
}

function SheetTabs() {
  return (
    <TabRow>
      <TabTool aria-label="First sheet">
        <svg width="16" height="12" viewBox="0 0 16 12" fill="none" stroke="#f7a48b" strokeWidth="2">
          <path d="M1 0v12M4 6h12M8 2L4 6l4 4" />
        </svg>
      </TabTool>
      <TabTool aria-label="Previous sheet">
        <svg width="15" height="10" viewBox="0 0 15 10" fill="#999">
          <path d="M0 0h1v10H0zM8 0v10L1 5zM15 0v10L8 5z" />
        </svg>
      </TabTool>
      <TabTool aria-label="Next sheet">
        <svg width="15" height="10" viewBox="0 0 15 10" fill="#999">
          <path d="M14 0h1v10h-1zM0 0v10l7-5zM7 0v10l7-5z" />
        </svg>
      </TabTool>
      <TabTool aria-label="Last sheet">
        <svg width="16" height="12" viewBox="0 0 16 12" fill="none" stroke="#f7a48b" strokeWidth="2">
          <path d="M15 0v12M0 6h12M8 2l4 4-4 4" />
        </svg>
      </TabTool>
      <TabTool $wide aria-label="Add sheet">
        <svg width="16" height="17" viewBox="0 0 16 17" fill="none">
          <path d="M1 1.500h8l4 4v10H1z" fill="#fff" stroke="#4d4d4d" strokeWidth="1.200" />
          <path d="M9 1v4.500h4.500z" fill="#4d4d4d" />
          <circle cx="12" cy="13" r="3.800" fill="#168a2b" />
          <path d="M9.500 13h5M12 10.500v5" stroke="#fff" strokeWidth="1.200" />
        </svg>
      </TabTool>
      <SheetTab>Sheet1</SheetTab>
    </TabRow>
  )
}

function SideDeck() {
  return (
    <Sidebar>
      <SideButton aria-label="Sidebar settings">
        <svg width="10" height="10" viewBox="0 0 10 10" stroke="#3d3d3d">
          <path d="M0 .5h10M0 5h10M0 9.500h10" />
        </svg>
      </SideButton>
      <SideButton aria-label="Properties" $active>
        <svg width="16" height="16" viewBox="0 0 16 16">
          <rect width="16" height="7" rx="3.500" fill={colors.accent} />
          <rect y="9" width="16" height="7" rx="3.500" fill={colors.accent} />
          <circle cx="12.500" cy="3.500" r="2.500" fill="#fff" />
          <circle cx="3.500" cy="12.500" r="2.500" fill="#fff" />
        </svg>
      </SideButton>
      <SideButton aria-label="Styles">
        <Svg>
          <Glyph x={17} y={13} size={14}>A</Glyph>
          <path d="M2 21l4-4" stroke="#f99282" strokeWidth="3" />
          <path d="M4 12l4-4 8 8-3 3-4-1-5-5z" fill="#fff" />
          <path d="M9 8l7 8 2-2-6-7z" fill="#fff" />
        </Svg>
      </SideButton>
      <SideButton aria-label="Gallery">
        <Svg>
          <rect x="2.500" y="3" width="16" height="13" rx="1.500" fill="#d85fcb" />
          <rect x="5.500" y="7" width="16" height="13" rx="1.500" fill="#d85fcb" />
          <path d="M9 18l3-4 2 2 1-1 3 3z" fill="#fff" stroke="none" />
          <circle cx="17.500" cy="12" r="1.200" fill="#fff" stroke="none" />
        </Svg>
      </SideButton>
      <SideButton aria-label="Navigator">
        <Svg>
          <circle cx="12" cy="12" r="9.500" fill="#4f7de8" />
          <path d="M7 17l3-6 3 3z" fill="#fff" stroke="none" />
          <path d="M10 10.500l6-3-2.500 6c-2 2-5 0-3.500-3z" fill="#e5e5e5" stroke="none" />
          <path d="M12.500 9l4.500-2-2 4z" fill="#d33" stroke="none" />
        </Svg>
      </SideButton>
      <SideButton aria-label="Functions">
        <Svg>
          <path d="M13 2.500C9 1.500 8.500 3 8.500 6v15M4 9h8" stroke="#262626" strokeWidth="2.200" />
          <path d="M15 15.500l6 6M21 15.500l-6 6" stroke="#262626" strokeWidth="1.800" />
        </Svg>
      </SideButton>
      <SideGrip aria-label="Hide sidebar">
        <svg width="7" height="8" viewBox="0 0 7 8">
          <path d="M1 0v8l5-4z" fill="#fff" />
        </svg>
      </SideGrip>
    </Sidebar>
  )
}

function Status() {
  const [zoom, setZoom] = useState(100)

  return (
    <StatusBar>
      <StatusItem>Sheet 1 of 1</StatusItem>
      <StatusItem>Selected: 1 row, 6 columns</StatusItem>
      <StatusItem>PageStyle_Sheet1</StatusItem>
      <StatusItem $center>English (Hong Kong)</StatusItem>
      <StatusItem />
      <StatusItem $center>
        <svg width="18" height="12" viewBox="0 0 18 12" fill="none">
          <path d="M1 2.500h8v7H1z" stroke={colors.accent} strokeWidth="1.400" />
          <path d="M12.500 1h5M12.500 11h5M15 1v10" stroke="#333" />
        </svg>
      </StatusItem>
      <StatusItem $center>
        <Svg size={16}>
          <path d="M9.500 3h5v8h3.500l-6 8-6-8h3.500z" fill="#a4d64c" strokeWidth="1.800" />
          <path d="M5.500 21.500h13" strokeWidth="2" />
          <circle cx="19" cy="4" r="3" fill="#c9182b" stroke="none" />
        </Svg>
      </StatusItem>
      <StatusItem />
      <StatusItem $center>Average: 4852; Sum: 4852</StatusItem>
      <StatusItem $center>
        <svg width="9" height="9" viewBox="0 0 9 9" stroke="#6b6b6b" strokeWidth="2">
          <path d="M0 4.500h9" />
        </svg>
        <ZoomSlider type="range" aria-label="Zoom" min="0" max="200" value={zoom} onChange={(e) => setZoom(+e.target.value)} />
        <svg width="9" height="9" viewBox="0 0 9 9" stroke="#6b6b6b" strokeWidth="2">
          <path d="M0 4.500h9M4.500 0v9" />
        </svg>
      </StatusItem>
      <StatusItem>{zoom}%</StatusItem>
    </StatusBar>
  )
}

function App() {
  return (
    <Desktop>
      <GlobalStyle />
      <TopPanel />
      <Workspace>
        <AppDock />
        <Window>
          <TitleBar>
            <Title>SalesRep.xlsx - LibreOffice Calc</Title>
            <WindowButtons>
              <RoundButton aria-label="Minimize">
                <svg width="8" height="8" viewBox="0 0 8 8" stroke="#3d3d3d">
                  <path d="M0 6.500h8" />
                </svg>
              </RoundButton>
              <RoundButton aria-label="Restore">
                <svg width="8" height="8" viewBox="0 0 8 8" fill="none" stroke="#3d3d3d">
                  <path d="M.5 2.500h5v5h-5z" />
                  <path d="M2 .5h5.500V6" stroke="#8a8a8a" />
                </svg>
              </RoundButton>
              <RoundButton aria-label="Close window">
                <Cross size={9} width={2.5} />
              </RoundButton>
            </WindowButtons>
          </TitleBar>
          <MenuRow>
            <MenuBar>
              {menus.map((name) => (
                <MenuItem key={name}>{name}</MenuItem>
              ))}
            </MenuBar>
            <CloseDocument aria-label="Close document">
              <Cross size={9} width={2.5} />
            </CloseDocument>
          </MenuRow>
          <Toolbar $height={38}>
            <Tools items={standardTools} />
          </Toolbar>
          <Toolbar $height={40}>
            <ComboBox label="Font name" value="等线" width={221} gap={8} italic />
            <ComboBox label="Font size" value="11 pt" width={101} />
            <Tools items={formatTools} />
          </Toolbar>
          <Body>
            <DocumentPane>
              <FormulaBar>
                <ComboBox label="Name box" value="B12:G12" width={173} gap={1} />
                <Separator />
                <SmallTool $width={24} aria-label="Function wizard">
                  <svg width="14" height="16" viewBox="0 0 14 16" fill="none" stroke="#262626">
                    <path d="M7 2C4 1.500 3.500 2.500 3.500 5v9M1 6.500h5" strokeWidth="2" />
                    <path d="M8.500 10l4 4M12.500 10l-4 4" strokeWidth="1.200" />
                  </svg>
                </SmallTool>
                <SmallTool $width={22} aria-label="Sum">
                  <svg width="14" height="14" viewBox="0 0 14 14" fill="none" stroke="#262626" strokeWidth="2">
                    <path d="M12 4V2H2.500L7 7l-4.500 5H12v-2" />
                  </svg>
                </SmallTool>
                <SmallTool $width={15} aria-label="Sum options">
                  <Caret />
                </SmallTool>
                <SmallTool $width={24} aria-label="Formula">
                  <svg width="12" height="8" viewBox="0 0 12 8" stroke="#262626" strokeWidth="2">
                    <path d="M0 1h12M0 7h12" />
                  </svg>
                </SmallTool>
                <FormulaInput aria-label="Input line" />
                <ExpandButton aria-label="Expand formula bar">
                  <Chevron />
                </ExpandButton>
              </FormulaBar>
              <Notice text="Help us make LibreOffice even better!" action="Get involved" />
              <Notice text="Your donations support our worldwide community." action="Donate" />
              <SheetRow>
                <Sheet />
                <ScrollColumn>
                  <SplitHandle />
                  <ScrollThumb $vertical />
                </ScrollColumn>
              </SheetRow>
              <ScrollRow>
                <ScrollThumb />
                <SplitHandle $vertical />
              </ScrollRow>
              <SheetTabs />
            </DocumentPane>
            <SideDeck />
          </Body>
          <Status />
        </Window>
      </Workspace>
    </Desktop>
  )
}

export default App
